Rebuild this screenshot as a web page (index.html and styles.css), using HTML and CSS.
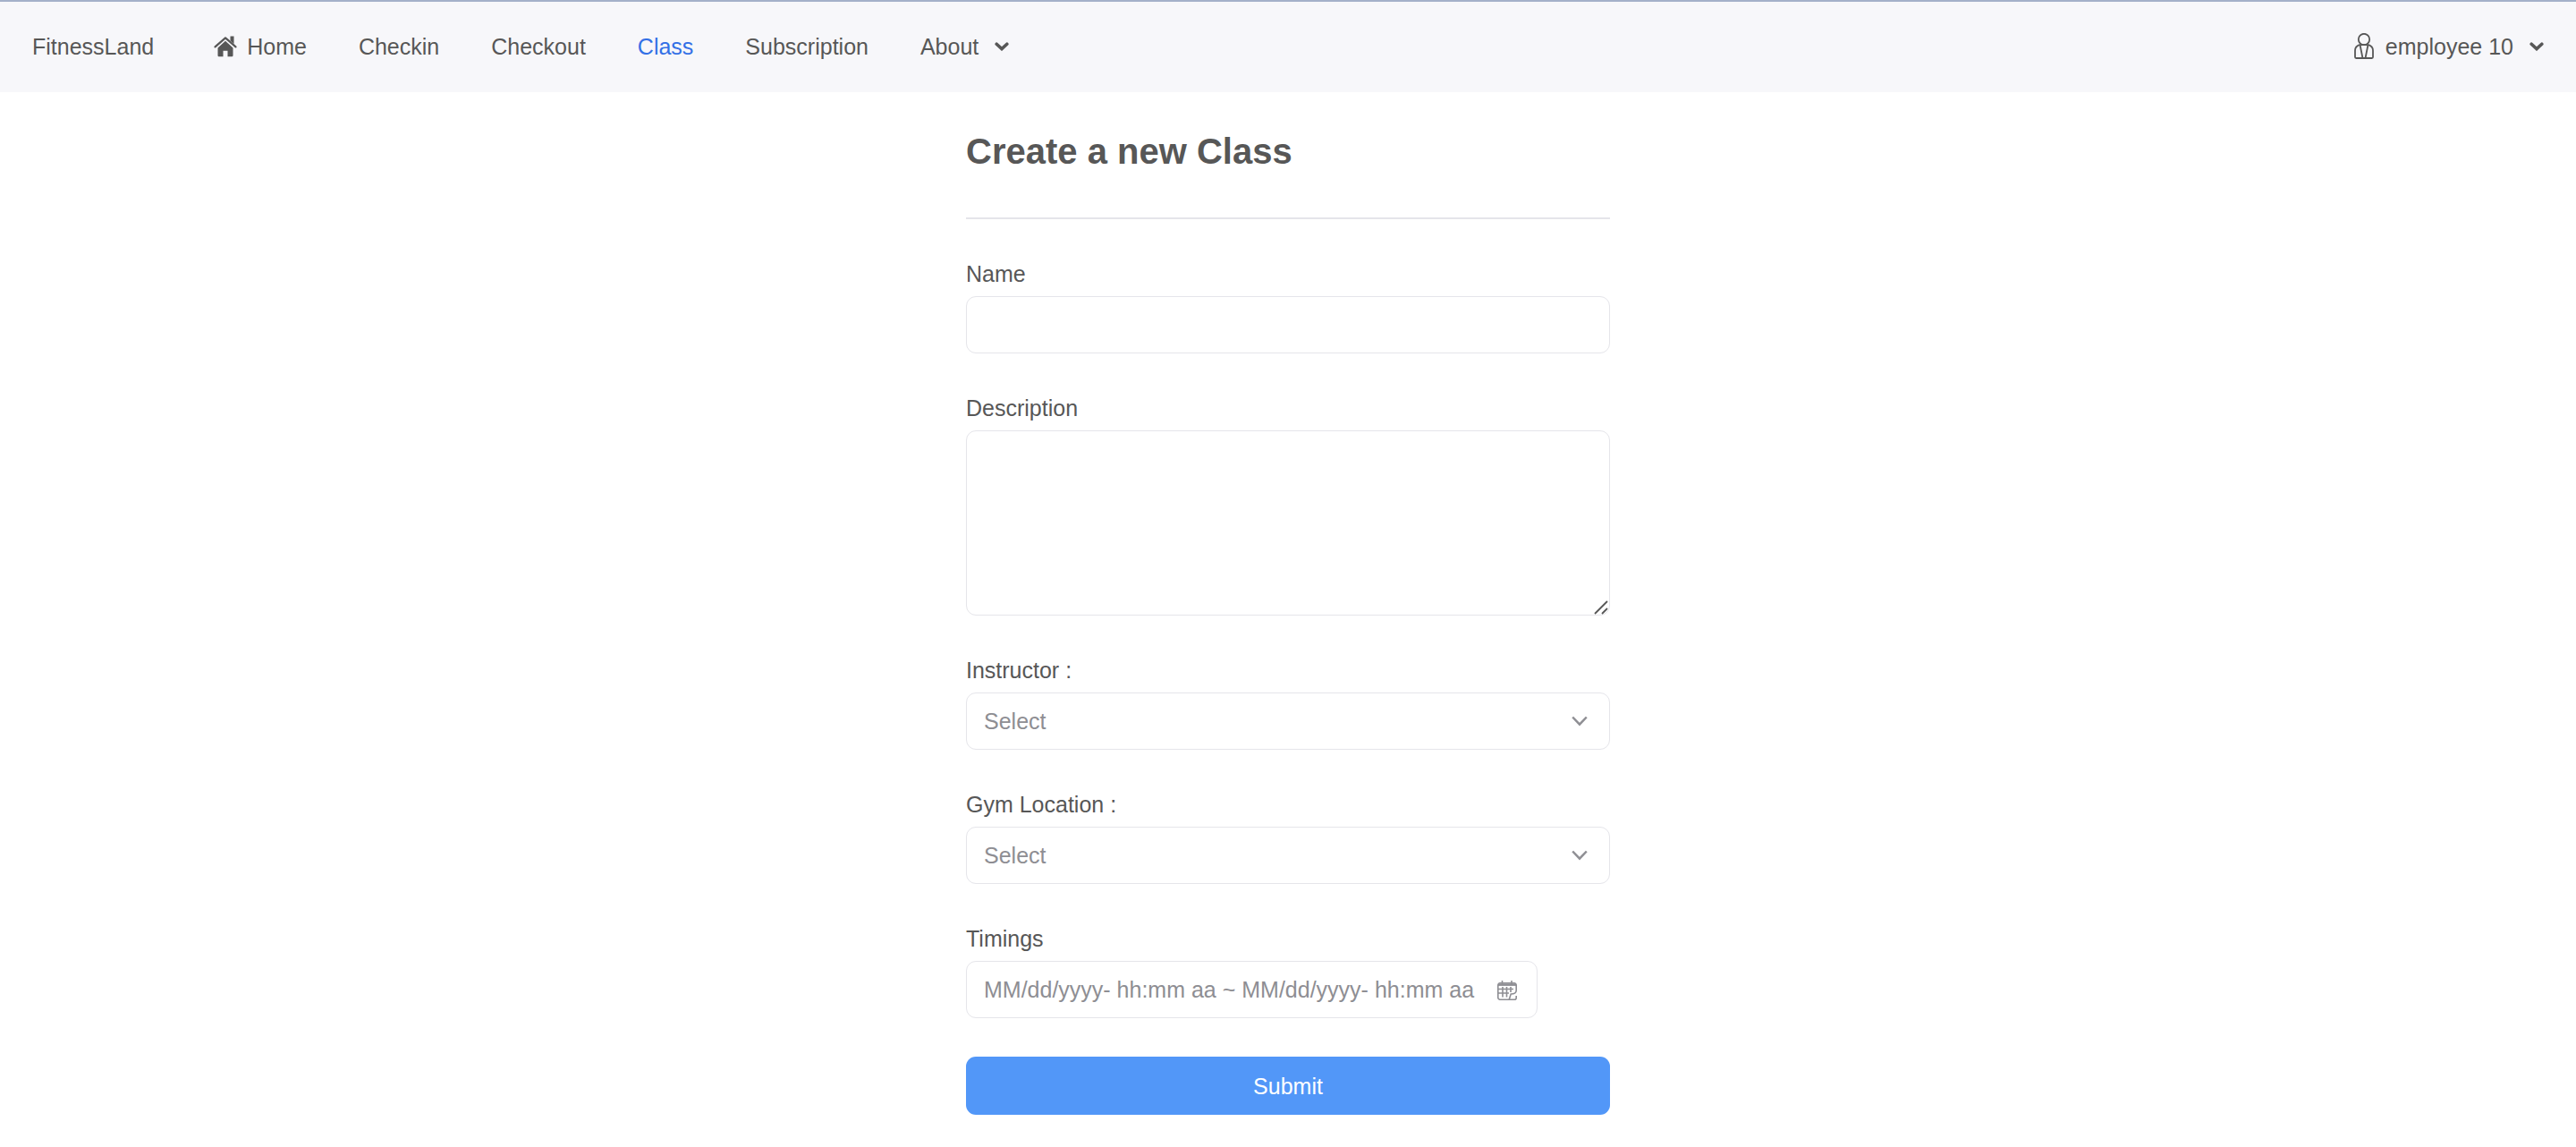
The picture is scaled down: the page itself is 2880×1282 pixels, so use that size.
FILE: index.html
```html
<!DOCTYPE html>
<html lang="en">
<head>
<meta charset="utf-8">
<meta name="viewport" content="width=device-width, initial-scale=1">
<title>FitnessLand</title>
<link rel="stylesheet" href="styles.css">
</head>
<body>
<header class="navbar">
  <a class="brand" href="#">FitnessLand</a>
  <nav class="nav">
    <a class="nav-item" href="#">
      <svg class="icon-home" viewBox="0 0 26 24" aria-hidden="true"><path d="M1.500 12.400 13 2.300l11.500 10.100" fill="none" stroke="currentColor" stroke-width="2.200" stroke-linecap="round" stroke-linejoin="round"/><path d="M18.500 0.500h4v8.500l-4-3.500zM13 5.800l8.500 7.600V22a1.200 1.200 0 0 1-1.200 1.200H15.500v-6.500h-5v6.500H5.700A1.200 1.200 0 0 1 4.500 22v-8.600z" fill="currentColor"/></svg>
      <span>Home</span>
    </a>
    <a class="nav-item" href="#">Checkin</a>
    <a class="nav-item" href="#">Checkout</a>
    <a class="nav-item active" href="#">Class</a>
    <a class="nav-item" href="#">Subscription</a>
    <button class="nav-item" type="button">About
      <svg class="caret" viewBox="0 0 16 10" aria-hidden="true"><path d="M2.200 2.200 8 7.600l5.800-5.400"/></svg>
    </button>
  </nav>
  <button class="nav-item account" type="button">
    <svg class="icon-user" viewBox="0 0 22 29" aria-hidden="true"><circle cx="11" cy="7" r="6.200"/><path d="M6.500 12.800C3 13.800 1 16 1 19.500v7.300c0 .8.400 1.200 1.200 1.200h17.600c.8 0 1.200-.4 1.200-1.200v-7.300c0-3.500-2-5.700-5.500-6.700M6.500 13l3 15M15.500 13l-3 15M6.500 13.200h9"/></svg>
    <span>employee 10</span>
    <svg class="caret" viewBox="0 0 16 10" aria-hidden="true"><path d="M2.200 2.200 8 7.600l5.800-5.400"/></svg>
  </button>
</header>

<main class="page">
  <h1 class="title">Create a new Class</h1>
  <hr class="divider">
  <form class="form">
    <div class="group">
      <label for="name">Name</label>
      <input class="control" id="name" type="text">
    </div>
    <div class="group">
      <label for="description">Description</label>
      <div class="field">
        <textarea class="control textarea" id="description"></textarea>
        <svg class="grip" viewBox="0 0 16 16" aria-hidden="true"><path d="M1 15 15 1M9 15l6-6"/></svg>
      </div>
    </div>
    <div class="group">
      <label for="instructor">Instructor :</label>
      <div class="field">
        <select class="control" id="instructor"><option>Select</option></select>
        <svg class="chevron" viewBox="0 0 18 12" aria-hidden="true"><path d="M1.200 1.500 9 9.600l7.800-8.100"/></svg>
      </div>
    </div>
    <div class="group">
      <label for="location">Gym Location :</label>
      <div class="field">
        <select class="control" id="location"><option>Select</option></select>
        <svg class="chevron" viewBox="0 0 18 12" aria-hidden="true"><path d="M1.200 1.500 9 9.600l7.800-8.100"/></svg>
      </div>
    </div>
    <div class="group">
      <label for="timings">Timings</label>
      <div class="field range">
        <input class="control" id="timings" type="text" placeholder="MM/dd/yyyy- hh:mm aa ~ MM/dd/yyyy- hh:mm aa">
        <svg class="calendar" viewBox="0 0 22 22" aria-hidden="true"><path d="M13 21.200H3A2.200 2.200 0 0 1 .8 19V5A2.200 2.200 0 0 1 3 2.800h16A2.200 2.200 0 0 1 21.200 5v6c0 3-3 4-6 4l-2 6.200h6a2 2 0 0 0 2-2V17M5.500 0v4M16 0v4"/><path d="M1 4.600h20" stroke-width="2.600"/><path d="M1 9.500h17M1 14h12M6 7v11.500M10.500 7v11.500M15 7v6"/></svg>
      </div>
    </div>
    <button class="submit" type="submit">Submit</button>
  </form>
</main>
</body>
</html>
```
FILE: styles.css
```css
* {
  box-sizing: border-box;
}

body {
  margin: 0;
  background: #fff;
  color: #575757;
  font: 25px/36px "Liberation Sans", Arial, sans-serif;
}

button,
input,
select,
textarea {
  font: inherit;
  color: inherit;
}

svg {
  flex: none;
}

.navbar {
  display: flex;
  align-items: stretch;
  height: 103px;
  padding-bottom: 2px;
  border-top: 2px solid #a4b1c9;
  background: #f7f7fa;
}

.brand {
  display: flex;
  align-items: center;
  padding: 0 38px 0 36px;
  color: inherit;
  text-decoration: none;
}

.nav {
  display: flex;
  flex: 1;
}

.nav-item {
  display: flex;
  align-items: center;
  padding: 0 29px;
  border: 0;
  background: none;
  color: inherit;
  text-decoration: none;
  white-space: nowrap;
}

.nav-item.active {
  color: #3370e6;
}

.icon-home {
  width: 26px;
  height: 24px;
  margin-right: 11px;
}

.icon-user {
  width: 22px;
  height: 29px;
  margin-right: 13px;
  fill: none;
  stroke: currentColor;
  stroke-width: 1.800;
}

.caret {
  width: 16px;
  height: 10px;
  margin-left: 18px;
  fill: none;
  stroke: currentColor;
  stroke-width: 3.600;
  stroke-linecap: round;
}

.account {
  padding-right: 36px;
}

.page {
  max-width: 720px;
  margin: 0 auto;
  padding: 34px 0 36px;
}

.title {
  margin: 0;
  font-size: 40px;
  line-height: 64px;
}

.divider {
  height: 2px;
  margin: 42px 0 43px;
  border: 0;
  background: #e5e5ea;
}

.form {
  display: grid;
  gap: 43px;
}

.group {
  display: grid;
  gap: 7px;
}

.field {
  position: relative;
  display: grid;
}

.control {
  width: 100%;
  height: 64px;
  padding: 0 19px;
  border: 1px solid #e5e5ea;
  border-radius: 11px;
  background: #fff;
  appearance: none;
}

.control::placeholder,
select.control {
  color: #8e8e93;
  opacity: 1;
}

.textarea {
  height: 207px;
  padding: 13px 19px;
  resize: vertical;
}

.textarea::-webkit-resizer {
  background: transparent;
}

.grip {
  position: absolute;
  right: 2px;
  bottom: 1px;
  width: 16px;
  height: 16px;
  fill: none;
  stroke: #575757;
  stroke-width: 1.800;
  pointer-events: none;
}

.chevron {
  position: absolute;
  top: 26px;
  right: 25px;
  width: 18px;
  height: 12px;
  fill: none;
  stroke: #8e8e93;
  stroke-width: 2.500;
  pointer-events: none;
}

.range {
  max-width: 639px;
}

.calendar {
  position: absolute;
  top: 22px;
  right: 23px;
  width: 22px;
  height: 22px;
  fill: none;
  stroke: #8e8e93;
  stroke-width: 1.600;
  pointer-events: none;
}

.submit {
  height: 65px;
  border: 0;
  border-radius: 11px;
  background: #5297f8;
  color: #fff;
}
```
